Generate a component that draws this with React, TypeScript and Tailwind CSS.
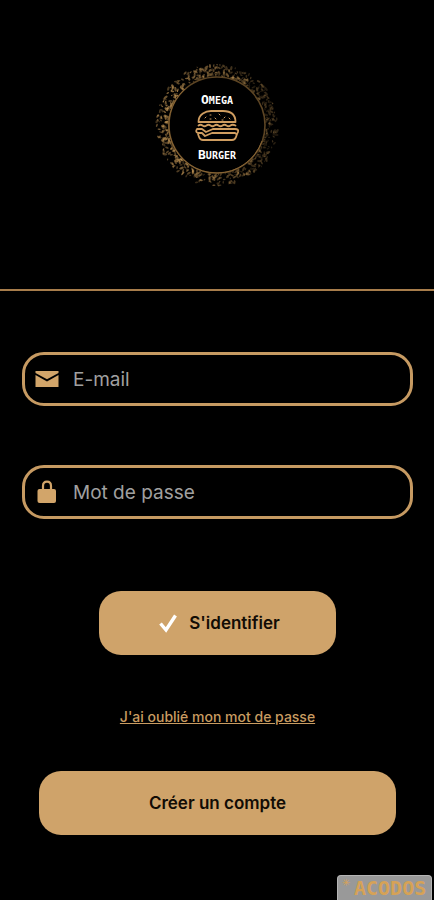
import React from "react";

const rand = (n: number) => {
  const v = Math.sin(n * 127.1 + 11.7) * 43758.5453;
  return v - Math.floor(v);
};

const leaves = Array.from({ length: 560 }, (_, i) => {
  const angle = rand(i) * Math.PI * 2;
  const radius = 49 + Math.pow(rand(i + 900), 1.5) * 12;
  const left = (1 - Math.cos(angle)) / 2;
  return {
    x: 62 + Math.cos(angle) * radius,
    y: 61 + Math.sin(angle) * radius,
    turn: rand(i + 1800) * 180,
    size: 0.9 + rand(i + 2700) * 1.5,
    opacity: (0.24 + left * 0.34) * (0.5 + rand(i + 3600) * 0.7),
  };
});

function Logo() {
  return (
    <svg viewBox="0 0 124 124" className="h-[124px] w-[124px]" role="img" aria-label="Omega Burger">
      {leaves.map((l, i) => (
        <ellipse
          key={i}
          cx={l.x}
          cy={l.y}
          rx={l.size}
          ry={l.size * 0.5}
          fill="#c99b59"
          opacity={l.opacity}
          transform={`rotate(${l.turn} ${l.x} ${l.y})`}
        />
      ))}
      <circle cx="62" cy="61" r="48" fill="#000" stroke="#5d4524" strokeWidth="1.6" />
      <path d="M30 25A48 48 0 0 0 62 109A48 48 0 0 0 107 77" fill="none" stroke="#8a6635" strokeWidth="1" />
      <g fill="#fff" textAnchor="middle" fontFamily="'DejaVu Sans Mono', monospace" fontWeight="700">
        <text x="62" y="40" fontSize="13">O<tspan fontSize="10">MEGA</tspan></text>
        <text x="62" y="95" fontSize="13">B<tspan fontSize="10">URGER</tspan></text>
      </g>
      <g fill="none" stroke="#cf9d60" strokeWidth="1.8" strokeLinecap="round" strokeLinejoin="round">
        <path d="M43.5 58C43.5 50 51 47 56 47H68C75 47 80.5 50 80.5 58Z" />
        <path d="M43.5 61.500Q45.5 60 47.5 61.500T51.5 61.500T55.5 61.500T59.5 61.500T63.5 61.500T67.5 61.500T71.5 61.500T75.5 61.500T80.5 61.500" />
        <path d="M58 65H80Q84 65 83 68T80 69H57L50 72L47 69H43Q40 68 42 65H47L51 68L58 65" />
        <path d="M43 70L44 73Q45 76 48 76H77Q80 76 81 73L82 70" />
      </g>
      <path
        d="M50 54L51 53M55 51H56M60 54L61 55M64 50L65 51M69 54L70 53M74 54L75 55M55 55H56M67 56H68"
        stroke="#cf9d60"
        strokeWidth="1"
        strokeLinecap="round"
      />
    </svg>
  );
}

function MailIcon() {
  return (
    <svg viewBox="0 0 24 16" className="h-4 w-6 shrink-0" fill="#d2a56a" aria-hidden="true">
      <path d="M0.5 0H23.5V2L12 8.2L0.5 2Z" />
      <path d="M0.5 4L12 10.6L23.5 4V16H0.5Z" />
    </svg>
  );
}

function LockIcon() {
  return (
    <svg viewBox="0 0 24 24" className="h-6 w-6 shrink-0" aria-hidden="true">
      <path d="M8 11V6Q8 1.6 12 1.6T16 6V11" fill="none" stroke="#d2a56a" strokeWidth="2.2" />
      <rect x="2.5" y="9" width="18.5" height="14" rx="2" fill="#d2a56a" />
    </svg>
  );
}

type FieldProps = { id: string; label: string; type: string; icon: React.ReactNode };

function Field({ id, label, type, icon }: FieldProps) {
  return (
    <div className="flex h-[54px] w-full items-center gap-[14px] rounded-[22px] border-3 border-[#c69a62] pr-4 pl-[10px]">
      <label htmlFor={id} aria-label={label}>{icon}</label>
      <input
        id={id}
        type={type}
        placeholder={label}
        className="min-w-0 flex-1 bg-transparent pt-[2px] text-[19px] text-[#a6a6a6] outline-none placeholder:text-[#a0a0a0]"
      />
    </div>
  );
}

export default function App() {
  return (
    <main className="flex min-h-screen flex-col bg-black font-['Inter',sans-serif]">
      <header className="flex justify-center border-b-2 border-[#a77d4b] pt-16 pb-[101px]">
        <Logo />
      </header>

      <form className="flex flex-col items-center pt-[61px] pr-[21px] pl-[22px]" onSubmit={(e) => e.preventDefault()}>
        <Field id="email" label="E-mail" type="email" icon={<MailIcon />} />
        <div className="mt-[59px] w-full">
          <Field id="password" label="Mot de passe" type="password" icon={<LockIcon />} />
        </div>
        <button
          type="submit"
          className="mt-[72px] flex h-16 w-[237px] items-center justify-center gap-3 rounded-[22px] bg-[#cfa36a] pt-[2px] pl-1 text-[17px] font-semibold text-[#120c05]"
        >
          <svg viewBox="0 0 18 20" className="h-5 w-[18px]" aria-hidden="true">
            <path d="M1.5 9.5L7 16L16.5 1.5" fill="none" stroke="#fff" strokeWidth="3.4" />
          </svg>
          S'identifier
        </button>
        <a href="#recuperation" className="mt-[52px] text-sm leading-5 font-medium text-[#c99c61] underline">
          J'ai oublié mon mot de passe
        </a>
        <div className="mt-11 w-full px-[17px]">
          <button
            type="button"
            className="h-16 w-full rounded-[22px] bg-[#cfa36a] pt-[2px] text-[17px] font-semibold text-[#120c05]"
          >
            Créer un compte
          </button>
        </div>
      </form>

      <footer className="mt-10 mr-[2px] flex h-[25px] w-[95px] items-start self-end rounded-t-sm border border-b-0 border-[#b5b5b5] bg-[#999] pl-1 text-[#d6a256]">
        <span className="text-[10px] leading-3" aria-hidden="true">✳</span>
        <span className="ml-1 font-['DejaVu_Sans_Mono',monospace] text-xl leading-6 font-bold">ACODOS</span>
      </footer>
    </main>
  );
}
